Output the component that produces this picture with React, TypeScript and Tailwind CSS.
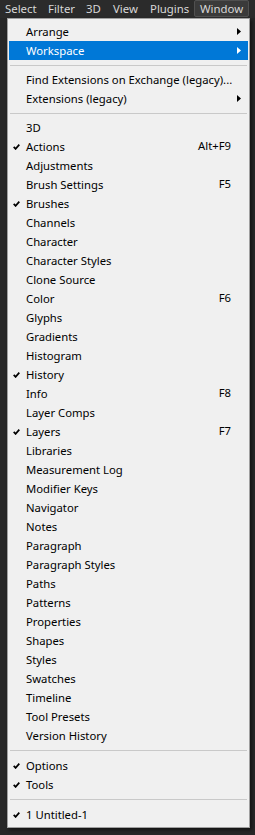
import React from "react";

type Item =
  | { sep: true; h?: string }
  | { label: string; check?: boolean; shortcut?: string; sub?: boolean; active?: boolean };

const items: Item[] = [
  { label: "Arrange", sub: true },
  { label: "Workspace", sub: true, active: true },
  { sep: true, h: "h-[10px]" },
  { label: "Find Extensions on Exchange (legacy)..." },
  { label: "Extensions (legacy)", sub: true },
  { sep: true, h: "h-[10px]" },
  { label: "3D" },
  { label: "Actions", check: true, shortcut: "Alt+F9" },
  { label: "Adjustments" },
  { label: "Brush Settings", shortcut: "F5" },
  { label: "Brushes", check: true },
  { label: "Channels" },
  { label: "Character" },
  { label: "Character Styles" },
  { label: "Clone Source" },
  { label: "Color", shortcut: "F6" },
  { label: "Glyphs" },
  { label: "Gradients" },
  { label: "Histogram" },
  { label: "History", check: true },
  { label: "Info", shortcut: "F8" },
  { label: "Layer Comps" },
  { label: "Layers", check: true, shortcut: "F7" },
  { label: "Libraries" },
  { label: "Measurement Log" },
  { label: "Modifier Keys" },
  { label: "Navigator" },
  { label: "Notes" },
  { label: "Paragraph" },
  { label: "Paragraph Styles" },
  { label: "Paths" },
  { label: "Patterns" },
  { label: "Properties" },
  { label: "Shapes" },
  { label: "Styles" },
  { label: "Swatches" },
  { label: "Timeline" },
  { label: "Tool Presets" },
  { label: "Version History" },
  { sep: true, h: "h-[11px]" },
  { label: "Options", check: true },
  { label: "Tools", check: true },
  { sep: true, h: "h-[11px]" },
  { label: "1 Untitled-1", check: true },
];

function Check() {
  return (
    <svg width="7" height="6" viewBox="0 0 7 6" className="block">
      <path d="M0.7 2.9 L2.6 4.9 L6.3 0.6" fill="none" stroke="#000" strokeWidth="1.7" />
    </svg>
  );
}

function Arrow({ white }: { white?: boolean }) {
  return (
    <svg width="4" height="7" viewBox="0 0 4 7" className="block">
      <path d="M0 0 L4 3.5 L0 7 Z" fill={white ? "#fff" : "#000"} />
    </svg>
  );
}

export default function App() {
  const font = { fontFamily: '"Noto Sans", "Open Sans", sans-serif' };
  return (
    <div className="w-[255px] h-[835px] bg-[#272727] overflow-hidden" style={font}>
      <div className="h-[18px] bg-[#2b2b2b] flex items-start text-[11.4px] text-[#d8d8d8] leading-[17px]">
        <span className="ml-[5px] w-[43px] shrink-0">Select</span>
        <span className="w-[38px] shrink-0">Filter</span>
        <span className="w-[27px] shrink-0">3D</span>
        <span className="w-[37px] shrink-0">View</span>
        <span className="w-[44px] shrink-0">Plugins</span>
        <span className="w-[55px] h-[17px] shrink-0 bg-[#3a3a3a] border border-[#505050] rounded-[2px] leading-[15px] pl-[5px]">
          Window
        </span>
      </div>
      <div className="ml-[7px] w-[243px] h-[810px] bg-[#f0f0f0] border border-[#a0a0a0] pt-[3px] px-[1px] text-[11.3px] text-black shadow-[2px_2px_3px_rgba(0,0,0,0.5)]">
        {items.map((it, i) =>
          "sep" in it ? (
            <div key={i} className={`${it.h} flex items-center px-[1px]`}>
              <div className="h-px w-full bg-[#c9c9c9]" />
            </div>
          ) : (
            <div
              key={i}
              className={`h-[19px] flex items-center ${it.active ? "bg-[#0078d7] text-white" : ""}`}
            >
              <div className="w-[17px] shrink-0 pl-[4px]">{it.check ? <Check /> : null}</div>
              <div className="flex-1 min-w-0 whitespace-nowrap leading-[19px]">{it.label}</div>
              <div className="w-[50px] shrink-0 text-right pr-[5px] whitespace-nowrap">{it.shortcut}</div>
              <div className="w-[12px] shrink-0 flex items-center pl-[1px]">{it.sub ? <Arrow white={it.active} /> : null}</div>
            </div>
          )
        )}
      </div>
    </div>
  );
}
